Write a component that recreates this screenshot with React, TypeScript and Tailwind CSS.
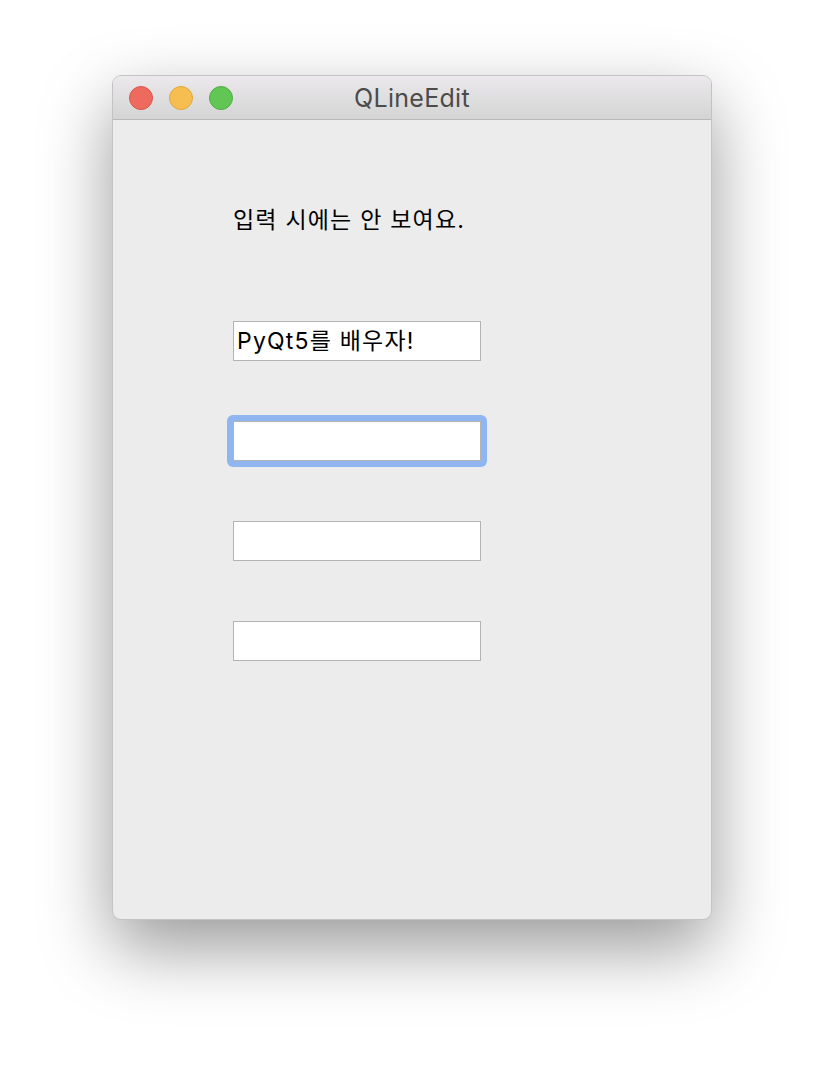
const fieldFont = {
  fontFamily: '"Inter", "Noto Sans CJK KR", sans-serif',
};

function TrafficLights() {
  return (
    <div className="flex items-center gap-[16px] pl-[16px]">
      <span className="block h-[24px] w-[24px] rounded-full bg-[#ee6a5f] border border-[#d9574c]" />
      <span className="block h-[24px] w-[24px] rounded-full bg-[#f6be50] border border-[#dfa73c]" />
      <span className="block h-[24px] w-[24px] rounded-full bg-[#62c655] border border-[#50ae44]" />
    </div>
  );
}

function LineEdit({ value, focused }: { value?: string; focused?: boolean }) {
  const box = (
    <div
      className="flex h-[40px] w-[248px] items-center border border-[#b3b3b3] bg-white pl-[3px] text-[23px] leading-none tracking-[1.2px] text-black"
      style={fieldFont}
    >
      {value}
    </div>
  );
  if (!focused) return box;
  return <div className="-m-[6px] self-start rounded-[6px] bg-[#8fb6ee] p-[6px]">{box}</div>;
}

export default function App() {
  return (
    <div className="min-h-[1068px] w-[824px] bg-white pl-[112px] pt-[75px]">
      <div className="flex h-[845px] w-[600px] flex-col overflow-hidden rounded-[9px] border border-[#c3c3c3] bg-[#ececec] shadow-[0_28px_70px_rgba(0,0,0,0.4)]">
        {/* title bar */}
        <div className="relative flex h-[44px] shrink-0 items-center border-b border-[#b9b9b9] bg-gradient-to-b from-[#ebe9eb] to-[#d5d4d5]">
          <TrafficLights />
          <div
            className="absolute inset-0 flex items-center justify-center pt-[3px] text-[25px] tracking-[0.3px] text-[#4b4b4b]"
            style={{ fontFamily: '"Inter", "Noto Sans", sans-serif' }}
          >
            QLineEdit
          </div>
        </div>

        {/* body */}
        <div className="flex flex-col pl-[120px] pt-[85px]">
          <p className="text-[23px] leading-[30px] tracking-[1.2px] text-black" style={fieldFont}>
            입력 시에는 안 보여요.
          </p>
          <div className="mt-[86px] flex flex-col items-start gap-[60px]">
            <LineEdit value="PyQt5를 배우자!" />
            <LineEdit focused />
            <LineEdit />
            <LineEdit />
          </div>
        </div>
      </div>
    </div>
  );
}
